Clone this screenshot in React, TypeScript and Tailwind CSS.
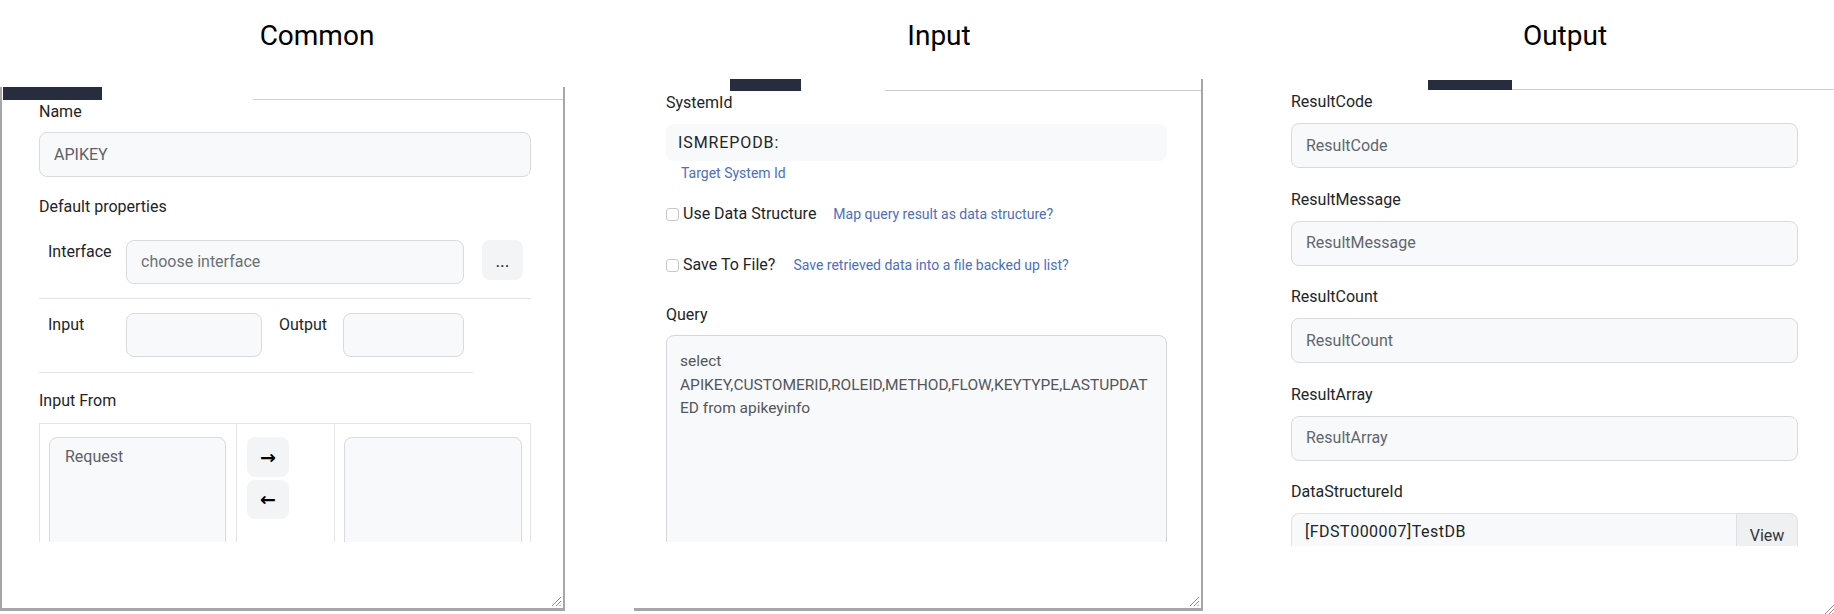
import React from 'react';

// little diagonal grip in the corner of a resizable box
function ResizeGrip() {
  return (
    <svg className="absolute right-[2px] bottom-[2px] w-[10px] h-[10px]" viewBox="0 0 10 10" fill="none">
      <path d="M10 1L1 10M10 5L5 10M10 8.5L8.5 10" stroke="#8d8d8d" strokeWidth="1" />
    </svg>
  );
}

function Label({ children }: { children: React.ReactNode }) {
  return <div className="h-6 leading-6 text-[16px] text-[#212529]">{children}</div>;
}

function OutputField({ label, first }: { label: string; first?: boolean }) {
  return (
    <div className={first ? '' : 'mt-[19.5px]'}>
      <Label>{label}</Label>
      <div className="mt-[9px] h-[45px] rounded-lg border border-[#d7dadf] bg-[#f8f9fa] flex items-center pl-[14px] text-[16px] text-[#60676e]">
        {label}
      </div>
    </div>
  );
}

function Title({ children }: { children: React.ReactNode }) {
  return (
    <div className="h-[50px] pt-[22px] text-center text-[28px] leading-[28px] font-normal text-black">{children}</div>
  );
}

export default function App() {
  return (
    <div className="w-[1834px] h-[614px] overflow-hidden bg-white flex font-['Roboto',sans-serif]">
      {/* Common */}
      <div className="w-[634px] shrink-0">
        <Title>Common</Title>
        <div className="relative mt-[37px] w-[565px] h-[524px] border-l-2 border-r-2 border-b-[3px] border-[#a6a6a6] bg-white">
          <div className="flex items-end h-[13px]">
            <div className="ml-px w-[99px] h-[13px] bg-[#272c3f]" />
            <div className="ml-[151px] flex-1 h-px bg-[#cfcfcf]" />
          </div>
          <div className="h-[442px] overflow-hidden pl-[37px] pr-[32px]">
            <Label>Name</Label>
            <div className="mt-2 h-[45px] rounded-lg border border-[#d7dadf] bg-[#f8f9fa] flex items-center pl-[14px] text-[16px] text-[#5a6168]">
              APIKEY
            </div>
            <div className="mt-[18px]">
              <Label>Default properties</Label>
            </div>
            <div className="mt-[21px] flex">
              <div className="w-[87px] pl-[9px] leading-6 text-[16px] text-[#212529]">Interface</div>
              <div className="w-[338px] h-[44px] rounded-lg border border-[#d7dadf] bg-[#f8f9fa] flex items-center pl-[14px] text-[16px] text-[#6b7178]">
                choose interface
              </div>
              <button className="ml-[18px] w-[41px] h-[40px] rounded-lg bg-[#f3f4f6] text-[18px] leading-none text-[#333] pt-[2px]">...</button>
            </div>
            <div className="mt-[14px] h-px bg-[#e3e3e3]" />
            <div className="mt-[14px] flex">
              <div className="w-[87px] pl-[9px] leading-6 text-[16px] text-[#212529]">Input</div>
              <div className="w-[136px] h-[44px] rounded-lg border border-[#d7dadf] bg-[#f8f9fa]" />
              <div className="ml-[17px] w-[64px] leading-6 text-[16px] text-[#212529]">Output</div>
              <div className="w-[121px] h-[44px] rounded-lg border border-[#d7dadf] bg-[#f8f9fa]" />
            </div>
            <div className="mt-[15px] w-[434px] h-px bg-[#e3e3e3]" />
            <div className="mt-4">
              <Label>Input From</Label>
            </div>
            <div className="mt-[10px] flex border border-[#e4e4e4] h-[200px]">
              <div className="w-[196px] pl-[9px] pt-[13px]">
                <div className="w-[177px] h-[160px] rounded-lg border border-[#d7dadf] bg-[#f8f9fa] pl-[15px] pt-[7px] text-[16px] leading-6 text-[#5a6168]">
                  Request
                </div>
              </div>
              <div className="w-[98px] border-l border-[#e4e4e4] pl-[10px] pt-[13px] flex flex-col gap-[3px]">
                <button className="w-[42px] h-[40px] rounded-lg bg-[#f3f4f6] text-[19px] font-bold text-black font-['DejaVu_Sans',sans-serif]">→</button>
                <button className="w-[42px] h-[39px] rounded-lg bg-[#f3f4f6] text-[19px] font-bold text-black font-['DejaVu_Sans',sans-serif]">←</button>
              </div>
              <div className="flex-1 border-l border-[#e4e4e4] pl-[9px] pt-[13px]">
                <div className="w-[178px] h-[160px] rounded-lg border border-[#d7dadf] bg-[#f8f9fa]" />
              </div>
            </div>
          </div>
          <ResizeGrip />
        </div>
      </div>

      {/* Input */}
      <div className="w-[610px] shrink-0">
        <Title>Input</Title>
        <div className="relative mt-[29px] w-[569px] h-[532px] border-r-2 border-b-[3px] border-[#a6a6a6] bg-white">
          <div className="flex items-end h-[12px]">
            <div className="ml-[96px] w-[71px] h-[12px] bg-[#272c3f]" />
            <div className="ml-[84px] flex-1 h-px bg-[#cfcfcf]" />
          </div>
          <div className="h-[451px] overflow-hidden pl-[32px] pr-[34px]">
            <Label>SystemId</Label>
            <div className="mt-[9px] h-[37px] rounded-lg bg-[#f8f9fa] flex items-center pl-[12px] text-[16px] tracking-[0.9px] text-[#212529]">
              ISMREPODB:
            </div>
            <div className="pt-[2px] pl-[15px] text-[14px] leading-5 text-[#4c6ec6]">Target System Id</div>
            <div className="mt-[19px] flex items-center h-6">
              <div className="w-[13px] h-[13px] rounded-[3px] border border-[#c8c8c8] bg-white" />
              <span className="ml-1 text-[16px] text-[#212529]">Use Data Structure</span>
              <span className="ml-[17px] text-[14px] text-[#4c6ec6]">Map query result as data structure?</span>
            </div>
            <div className="mt-[27px] flex items-center h-6">
              <div className="w-[13px] h-[13px] rounded-[3px] border border-[#c8c8c8] bg-white" />
              <span className="ml-1 text-[16px] text-[#212529]">Save To File?</span>
              <span className="ml-[18px] text-[14px] text-[#4c6ec6]">Save retrieved data into a file backed up list?</span>
            </div>
            <div className="mt-[26px]">
              <Label>Query</Label>
            </div>
            <div className="mt-2 h-[260px] rounded-lg border border-[#d3d6da] bg-[#f8f9fa] pl-[13px] pt-[14px] text-[15.5px] leading-[23.5px] text-[#51575d] whitespace-nowrap">
              <div>select</div>
              <div>APIKEY,CUSTOMERID,ROLEID,METHOD,FLOW,KEYTYPE,LASTUPDAT</div>
              <div>ED from apikeyinfo</div>
            </div>
          </div>
          <ResizeGrip />
        </div>
      </div>

      {/* Output */}
      <div className="w-[642px] shrink-0">
        <Title>Output</Title>
        <div className="relative ml-[13px] mt-[30px] w-[579px] h-[536px] bg-white">
          <div className="flex items-end h-[10px]">
            <div className="ml-[171px] w-[84px] h-[10px] bg-[#272c3f]" />
            <div className="flex-1 h-px bg-[#cfcfcf]" />
          </div>
          <div className="h-[456px] overflow-hidden pl-[34px] w-[541px]">
            <OutputField label="ResultCode" first />
            <OutputField label="ResultMessage" />
            <OutputField label="ResultCount" />
            <OutputField label="ResultArray" />
            <div className="mt-[19.5px]">
              <Label>DataStructureId</Label>
              <div className="mt-[9px] flex h-[45px]">
                <div className="flex-1 rounded-l-lg border border-r-0 border-[#dfe2e6] bg-[#f8f9fa] pl-[13px] pt-[6px] text-[16px] leading-6 tracking-[0.5px] text-[#212529]">
                  [FDST000007]TestDB
                </div>
                <button className="w-[62px] rounded-r-lg border border-[#dcdfe3] bg-[#eef0f2] text-[16px] text-[#333]">View</button>
              </div>
            </div>
          </div>
          <ResizeGrip />
        </div>
      </div>
    </div>
  );
}
